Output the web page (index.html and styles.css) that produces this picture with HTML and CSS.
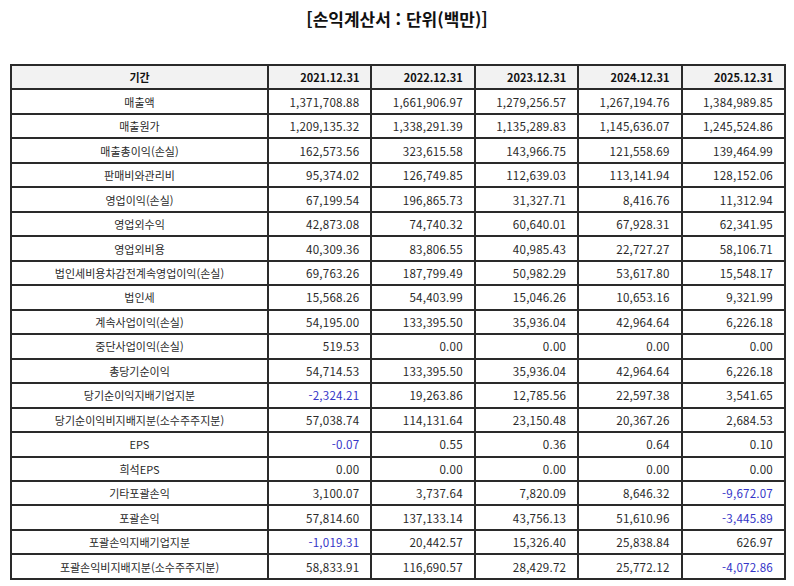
FILE: index.html
```html
<!DOCTYPE html>
<html lang="ko">
<head>
<meta charset="utf-8">
<title>손익계산서</title>
<link rel="stylesheet" href="styles.css">
</head>
<body>
<h1 class="title">[손익계산서 : 단위(백만)]</h1>
<table class="fin">
<colgroup><col class="c-label"><col><col><col><col><col></colgroup>
<thead>
<tr><th class="lbl">기간</th><th>2021.12.31</th><th>2022.12.31</th><th>2023.12.31</th><th>2024.12.31</th><th>2025.12.31</th></tr>
</thead>
<tbody>
<tr><td class="lbl">매출액</td><td>1,371,708.88</td><td>1,661,906.97</td><td>1,279,256.57</td><td>1,267,194.76</td><td>1,384,989.85</td></tr>
<tr><td class="lbl">매출원가</td><td>1,209,135.32</td><td>1,338,291.39</td><td>1,135,289.83</td><td>1,145,636.07</td><td>1,245,524.86</td></tr>
<tr><td class="lbl">매출총이익(손실)</td><td>162,573.56</td><td>323,615.58</td><td>143,966.75</td><td>121,558.69</td><td>139,464.99</td></tr>
<tr><td class="lbl">판매비와관리비</td><td>95,374.02</td><td>126,749.85</td><td>112,639.03</td><td>113,141.94</td><td>128,152.06</td></tr>
<tr><td class="lbl">영업이익(손실)</td><td>67,199.54</td><td>196,865.73</td><td>31,327.71</td><td>8,416.76</td><td>11,312.94</td></tr>
<tr><td class="lbl">영업외수익</td><td>42,873.08</td><td>74,740.32</td><td>60,640.01</td><td>67,928.31</td><td>62,341.95</td></tr>
<tr><td class="lbl">영업외비용</td><td>40,309.36</td><td>83,806.55</td><td>40,985.43</td><td>22,727.27</td><td>58,106.71</td></tr>
<tr><td class="lbl">법인세비용차감전계속영업이익(손실)</td><td>69,763.26</td><td>187,799.49</td><td>50,982.29</td><td>53,617.80</td><td>15,548.17</td></tr>
<tr><td class="lbl">법인세</td><td>15,568.26</td><td>54,403.99</td><td>15,046.26</td><td>10,653.16</td><td>9,321.99</td></tr>
<tr><td class="lbl">계속사업이익(손실)</td><td>54,195.00</td><td>133,395.50</td><td>35,936.04</td><td>42,964.64</td><td>6,226.18</td></tr>
<tr><td class="lbl">중단사업이익(손실)</td><td>519.53</td><td>0.00</td><td>0.00</td><td>0.00</td><td>0.00</td></tr>
<tr><td class="lbl">총당기순이익</td><td>54,714.53</td><td>133,395.50</td><td>35,936.04</td><td>42,964.64</td><td>6,226.18</td></tr>
<tr><td class="lbl">당기순이익지배기업지분</td><td class="neg">-2,324.21</td><td>19,263.86</td><td>12,785.56</td><td>22,597.38</td><td>3,541.65</td></tr>
<tr><td class="lbl">당기순이익비지배지분(소수주주지분)</td><td>57,038.74</td><td>114,131.64</td><td>23,150.48</td><td>20,367.26</td><td>2,684.53</td></tr>
<tr><td class="lbl">EPS</td><td class="neg">-0.07</td><td>0.55</td><td>0.36</td><td>0.64</td><td>0.10</td></tr>
<tr><td class="lbl">희석EPS</td><td>0.00</td><td>0.00</td><td>0.00</td><td>0.00</td><td>0.00</td></tr>
<tr><td class="lbl">기타포괄손익</td><td>3,100.07</td><td>3,737.64</td><td>7,820.09</td><td>8,646.32</td><td class="neg">-9,672.07</td></tr>
<tr><td class="lbl">포괄손익</td><td>57,814.60</td><td>137,133.14</td><td>43,756.13</td><td>51,610.96</td><td class="neg">-3,445.89</td></tr>
<tr><td class="lbl">포괄손익지배기업지분</td><td class="neg">-1,019.31</td><td>20,442.57</td><td>15,326.40</td><td>25,838.84</td><td>626.97</td></tr>
<tr><td class="lbl">포괄손익비지배지분(소수주주지분)</td><td>58,833.91</td><td>116,690.57</td><td>28,429.72</td><td>25,772.12</td><td class="neg">-4,072.86</td></tr>
</tbody>
</table>
</body>
</html>
```

FILE: styles.css
```css
html, body {
  margin: 0;
  padding: 0;
  background: #fff;
}
body {
  font-family: "Noto Sans CJK KR", "Noto Sans", sans-serif;
  color: #2a2a2a;
}
.title {
  margin: 0;
  height: 37px;
  line-height: 37px;
  font-size: 17px;
  font-weight: 700;
  text-align: center;
  color: #111;
}
.fin {
  margin: 27px 0 0 10px;
  width: 776px;
  table-layout: fixed;
  border-collapse: collapse;
  font-size: 11.6px;
}
.fin tr {
  height: 24.48px;
}
.c-label {
  width: 257px;
}
.fin th,
.fin td {
  border: 2px solid #2a2a2a;
  padding: 0 11px 0 4px;
  text-align: right;
  white-space: nowrap;
  line-height: 14px;
}
.fin td {
  letter-spacing: 0.2px;
}
.fin th {
  background: #f2f2f2;
  font-size: 11px;
  font-weight: 700;
  color: #111;
}
.fin .lbl {
  text-align: center;
  padding: 0 4px;
  font-size: 11px;
  letter-spacing: 0;
}
.fin .neg {
  color: #3535c8;
}
```
